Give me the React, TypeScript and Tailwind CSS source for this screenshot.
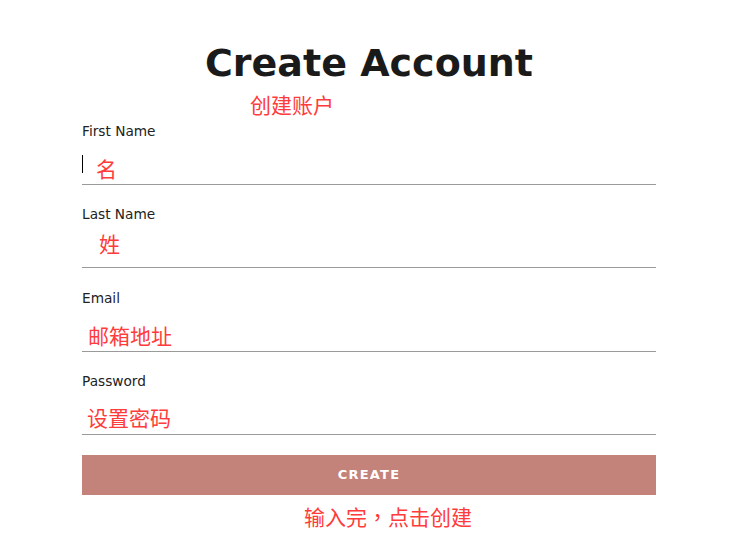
import React from "react";

const fields = [
  { label: "First Name", type: "text" },
  { label: "Last Name", type: "text" },
  { label: "Email", type: "email" },
  { label: "Password", type: "password" },
];

const cjk = '"Noto Sans CJK SC", sans-serif';

export default function App() {
  return (
    <div className="relative min-h-[539px] w-[749px] bg-white" style={{ fontFamily: '"DejaVu Sans", "Noto Sans", sans-serif' }}>
      <div className="ml-[82px] flex w-[574px] flex-col pt-[41px]">
        <h1 className="text-center text-[38px] font-bold leading-[44px] text-[#1a1a1a]">Create Account</h1>
        <form className="mt-[38px] flex flex-col" onSubmit={(e) => e.preventDefault()}>
          <div className="flex flex-col gap-[21.33px]">
            {fields.map((f) => (
              <div key={f.label} className="flex flex-col">
                <label className="block text-[13.7px] leading-4 text-[#222]">{f.label}</label>
                <div className="h-[46px] border-b border-[#9a9a9a]" />
              </div>
            ))}
          </div>
          <button type="submit" className="mt-5 flex h-10 w-full items-center justify-center bg-[#c3837b] text-[13px] font-bold tracking-[1.2px] text-white">
            CREATE
          </button>
        </form>
      </div>

      {/* red annotations */}
      <div className="absolute left-[82px] top-[155px] h-[18px] w-px bg-black" />
      {[
        { t: "创建账户", x: 250, y: 92 },
        { t: "名", x: 96, y: 156 },
        { t: "姓", x: 99, y: 231 },
        { t: "邮箱地址", x: 88, y: 323 },
        { t: "设置密码", x: 87, y: 405 },
      ].map((a) => (
        <div
          key={a.t}
          className="absolute whitespace-nowrap text-[21px] leading-[24px] text-[#ff3b3b]"
          style={{ left: a.x, top: a.y, fontFamily: cjk }}
        >
          {a.t}
        </div>
      ))}
      <div
        className="absolute left-[304px] top-[504px] whitespace-nowrap text-[21px] leading-[24px] text-[#ff3b3b]"
        style={{ fontFamily: cjk }}
      >
        输入完<span style={{ fontFamily: '"Noto Sans CJK TC", sans-serif' }}>，</span>点击创建
      </div>
    </div>
  );
}
